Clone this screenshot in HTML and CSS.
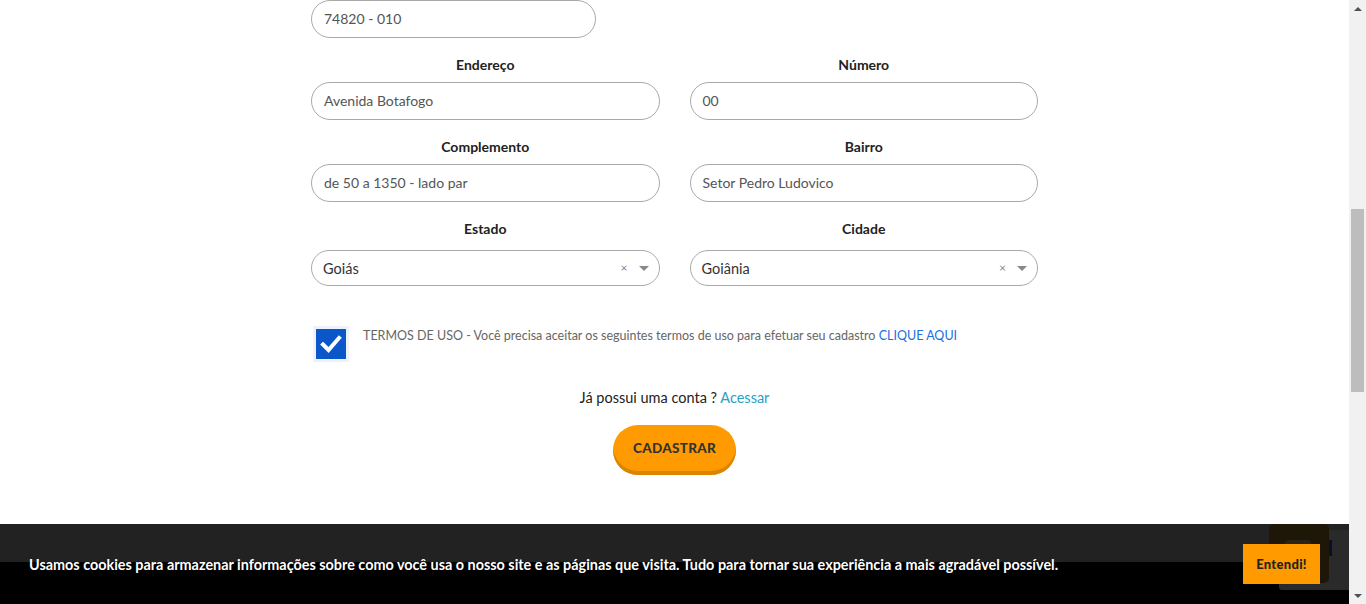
FILE: index.html
```html
<!DOCTYPE html>
<html lang="pt-BR">
<head>
<meta charset="utf-8">
<title>Cadastro</title>
<link rel="stylesheet" href="styles.css">
</head>
<body>
<div class="page">
  <main class="main">
    <form class="form">
      <div class="row row-first">
        <div class="field">
          <div class="input input-cep">74820 - 010</div>
        </div>
      </div>
      <div class="row">
        <div class="field">
          <label class="label">Endereço</label>
          <div class="input">Avenida Botafogo</div>
        </div>
        <div class="field">
          <label class="label">Número</label>
          <div class="input">00</div>
        </div>
      </div>
      <div class="row">
        <div class="field">
          <label class="label">Complemento</label>
          <div class="input">de 50 a 1350 - lado par</div>
        </div>
        <div class="field">
          <label class="label">Bairro</label>
          <div class="input">Setor Pedro Ludovico</div>
        </div>
      </div>
      <div class="row">
        <div class="field">
          <label class="label">Estado</label>
          <div class="select">
            <span class="select-value">Goiás</span>
            <span class="select-clear">×</span>
            <span class="select-arrow"></span>
          </div>
        </div>
        <div class="field">
          <label class="label">Cidade</label>
          <div class="select">
            <span class="select-value">Goiânia</span>
            <span class="select-clear">×</span>
            <span class="select-arrow"></span>
          </div>
        </div>
      </div>
      <div class="terms">
        <span class="checkbox">
          <svg viewBox="0 0 30 30" width="30" height="30"><path d="M7 15.5 L12.5 21 L23 9" fill="none" stroke="#fff" stroke-width="4" stroke-linecap="square"/></svg>
        </span>
        <p class="terms-text">TERMOS DE USO - Você precisa aceitar os seguintes termos de uso para efetuar seu cadastro <a class="terms-link" href="#">CLIQUE AQUI</a></p>
      </div>
      <p class="login">Já possui uma conta ? <a class="login-link" href="#">Acessar</a></p>
      <div class="actions">
        <button type="button" class="btn-submit">CADASTRAR</button>
      </div>
    </form>
    <footer class="footer"></footer>
    <div class="cookie">
      <span class="badge-back"><span class="badge-mark"></span></span>
      <span class="badge-top"><span class="badge-inner"></span></span>
      <p class="cookie-text">Usamos cookies para armazenar informações sobre como você usa o nosso site e as páginas que visita. Tudo para tornar sua experiência a mais agradável possível.</p>
      <button type="button" class="cookie-btn">Entendi!</button>
    </div>
  </main>
  <aside class="scrollbar">
    <span class="sb-up"></span>
    <span class="sb-track"><span class="sb-thumb"></span></span>
    <span class="sb-down"></span>
  </aside>
</div>
</body>
</html>
```

FILE: styles.css
```css
* { box-sizing: border-box; }
html, body { margin: 0; padding: 0; }
body {
  font-family: Lato, "Open Sans", "Noto Sans", sans-serif;
  color: #222;
  background: #fff;
  height: 604px;
  overflow: hidden;
}
.page {
  display: flex;
  width: 1366px;
  height: 604px;
}
.main {
  position: relative;
  width: 1349px;
  height: 604px;
  display: flex;
  flex-direction: column;
  overflow: hidden;
}
.form {
  width: 727px;
  margin: 0 auto;
  display: flex;
  flex-direction: column;
}
.row {
  display: flex;
  gap: 30px;
}
.field {
  flex: 1;
  display: flex;
  flex-direction: column;
}
.row-first .field { flex: none; width: 285px; }
.label {
  display: block;
  text-align: center;
  font-size: 14px;
  font-weight: 700;
  line-height: 16px;
  color: #222;
  margin-top: 19px;
  margin-bottom: 9px;
}
.input {
  height: 38px;
  border: 1px solid #a9a9a9;
  border-radius: 19px;
  padding: 0 12px;
  font-size: 14px;
  line-height: 36px;
  color: #555;
}
.select {
  margin-top: 4px;
  height: 36px;
  border: 1px solid #aaa;
  border-radius: 18px;
  padding: 0 10px 0 11px;
  display: flex;
  align-items: center;
  font-size: 14.5px;
  color: #333;
}
.select-value { flex: 1; }
.select-clear {
  font-size: 12px;
  color: #888;
  margin-right: 11px;
  line-height: 1;
}
.select-arrow {
  width: 0;
  height: 0;
  border-left: 5px solid transparent;
  border-right: 5px solid transparent;
  border-top: 5px solid #888;
}
.terms {
  display: flex;
  align-items: flex-start;
  margin-top: 43px;
  padding-left: 2px;
}
.checkbox {
  width: 36px;
  height: 36px;
  border: 3px solid #eef3fb;
  background: #0b57c9;
  flex: none;
  display: flex;
  align-items: center;
  justify-content: center;
  margin-top: -3px;
}
.checkbox svg { display: block; }
.terms-text {
  margin: 0 0 0 14px;
  font-size: 12.5px;
  line-height: 14px;
  color: #666;
}
.terms-link {
  color: #1a6fe0;
  text-decoration: none;
}
.login {
  margin: 27px 0 0;
  text-align: center;
  font-size: 14.5px;
  line-height: 18px;
  color: #222;
}
.login-link {
  color: #2a9fc2;
  text-decoration: none;
}
.actions {
  display: flex;
  justify-content: center;
  margin-top: 18px;
}
.btn-submit {
  width: 123px;
  height: 50px;
  border: 0;
  border-radius: 25px;
  background: #ff9a00;
  box-shadow: inset 0 -4px 0 #db8400;
  font-family: Lato, "Open Sans", sans-serif;
  font-weight: 900;
  font-size: 13.5px;
  letter-spacing: 0.3px;
  color: #333;
  padding: 0 0 5px;
}
.footer {
  margin-top: auto;
  height: 42px;
  background: #000;
}
.cookie {
  position: absolute;
  left: 0;
  right: 0;
  bottom: 0;
  height: 80px;
  background: rgba(0, 0, 0, 0.867);
  display: flex;
  align-items: center;
  justify-content: space-between;
  padding: 0 29px;
}
.cookie-text {
  position: relative;
  margin: 0;
  font-size: 14.4px;
  font-weight: 700;
  color: #fff;
}
.cookie-btn {
  position: relative;
  width: 77px;
  height: 40px;
  border: 0;
  background: #ff9a00;
  font-family: Lato, "Open Sans", sans-serif;
  font-weight: 900;
  font-size: 13px;
  color: #222;
  letter-spacing: 0.3px;
}
.badge-back {
  position: absolute;
  left: 1279px;
  top: 6px;
  width: 70px;
  height: 60px;
  background: #2a2a2a;
  border-radius: 3px 0 0 3px;
}
.badge-mark {
  position: absolute;
  left: 50px;
  top: 10px;
  width: 3px;
  height: 16px;
  background: #07102a;
}
.badge-top {
  position: absolute;
  left: 1269px;
  top: 0;
  width: 60px;
  height: 59px;
  background: #1e1606;
  border-radius: 5px;
}
.badge-inner {
  position: absolute;
  left: 16px;
  top: 16px;
  width: 26px;
  height: 26px;
  border-radius: 4px;
  background: #2a2418;
}
.scrollbar {
  width: 17px;
  height: 604px;
  background: #f1f1f1;
  display: flex;
  flex-direction: column;
  align-items: center;
}
.sb-up, .sb-down {
  flex: none;
  height: 17px;
  display: flex;
  align-items: center;
  justify-content: center;
}
.sb-up::before {
  content: "";
  border-left: 4px solid transparent;
  border-right: 4px solid transparent;
  border-bottom: 4px solid #505050;
}
.sb-down::before {
  content: "";
  border-left: 4px solid transparent;
  border-right: 4px solid transparent;
  border-top: 4px solid #505050;
}
.sb-track {
  flex: 1;
  width: 100%;
  display: flex;
  justify-content: center;
  padding-top: 192px;
}
.sb-thumb {
  width: 13px;
  height: 183px;
  background: #bdbdbd;
}
```
